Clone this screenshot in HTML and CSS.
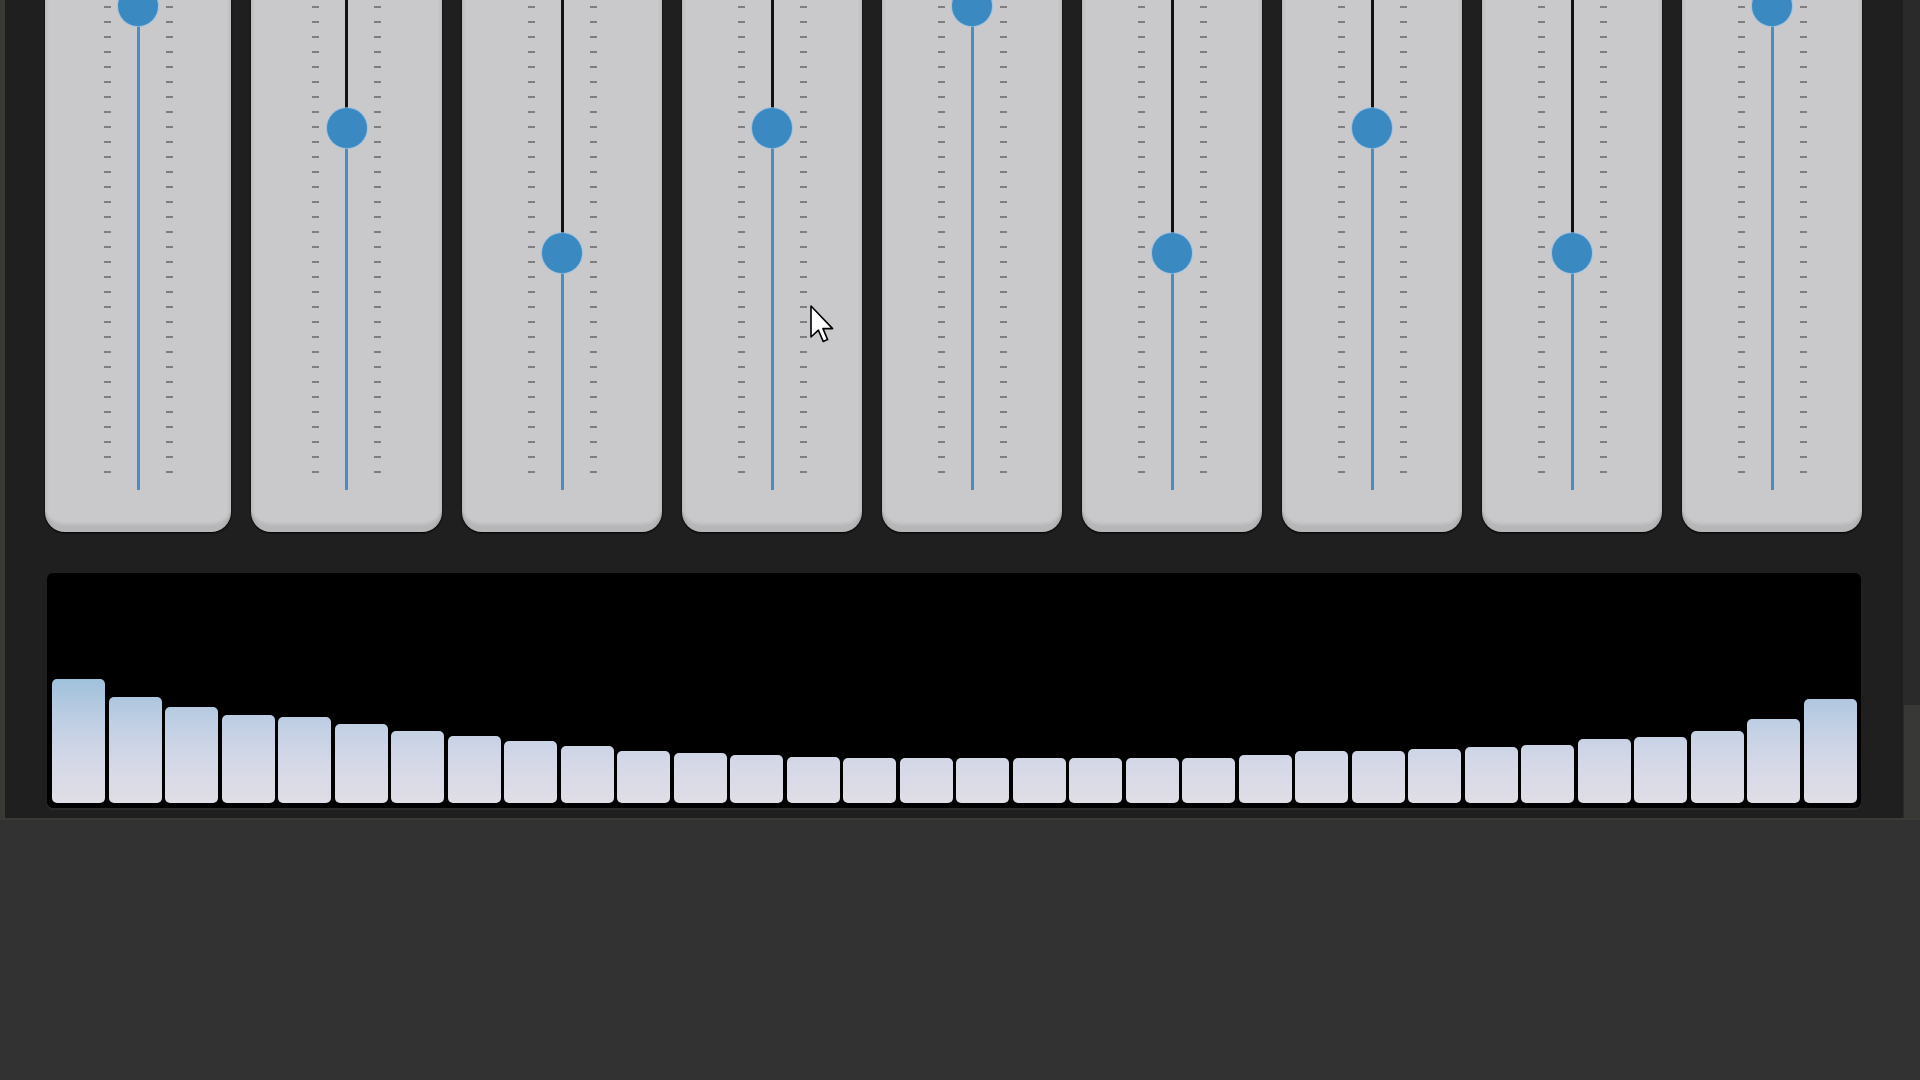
FILE: index.html
```html
<!DOCTYPE html>
<html lang="en">
<head>
<meta charset="utf-8">
<title>Equalizer</title>
<link rel="stylesheet" href="styles.css">
</head>
<body>
<div class="window">
  <div class="edge-left"></div>
  <main class="panel">
    <section class="sliders">
      <div class="card"><div class="scale" style="--c:6px"><div class="ticks"></div><div class="track"></div><div class="thumb"></div></div></div>
      <div class="card"><div class="scale" style="--c:128px"><div class="ticks"></div><div class="track"></div><div class="thumb"></div></div></div>
      <div class="card"><div class="scale" style="--c:253px"><div class="ticks"></div><div class="track"></div><div class="thumb"></div></div></div>
      <div class="card"><div class="scale" style="--c:128px"><div class="ticks"></div><div class="track"></div><div class="thumb"></div></div></div>
      <div class="card"><div class="scale" style="--c:6px"><div class="ticks"></div><div class="track"></div><div class="thumb"></div></div></div>
      <div class="card"><div class="scale" style="--c:253px"><div class="ticks"></div><div class="track"></div><div class="thumb"></div></div></div>
      <div class="card"><div class="scale" style="--c:128px"><div class="ticks"></div><div class="track"></div><div class="thumb"></div></div></div>
      <div class="card"><div class="scale" style="--c:253px"><div class="ticks"></div><div class="track"></div><div class="thumb"></div></div></div>
      <div class="card"><div class="scale" style="--c:6px"><div class="ticks"></div><div class="track"></div><div class="thumb"></div></div></div>
    </section>
    <section class="spectrum">
      <div class="bar" style="height:124px"></div>
      <div class="bar" style="height:106px"></div>
      <div class="bar" style="height:96px"></div>
      <div class="bar" style="height:88px"></div>
      <div class="bar" style="height:86px"></div>
      <div class="bar" style="height:79px"></div>
      <div class="bar" style="height:72px"></div>
      <div class="bar" style="height:67px"></div>
      <div class="bar" style="height:62px"></div>
      <div class="bar" style="height:57px"></div>
      <div class="bar" style="height:52px"></div>
      <div class="bar" style="height:50px"></div>
      <div class="bar" style="height:48px"></div>
      <div class="bar" style="height:46px"></div>
      <div class="bar" style="height:45px"></div>
      <div class="bar" style="height:45px"></div>
      <div class="bar" style="height:45px"></div>
      <div class="bar" style="height:45px"></div>
      <div class="bar" style="height:45px"></div>
      <div class="bar" style="height:45px"></div>
      <div class="bar" style="height:45px"></div>
      <div class="bar" style="height:48px"></div>
      <div class="bar" style="height:52px"></div>
      <div class="bar" style="height:52px"></div>
      <div class="bar" style="height:54px"></div>
      <div class="bar" style="height:56px"></div>
      <div class="bar" style="height:58px"></div>
      <div class="bar" style="height:64px"></div>
      <div class="bar" style="height:66px"></div>
      <div class="bar" style="height:72px"></div>
      <div class="bar" style="height:84px"></div>
      <div class="bar" style="height:104px"></div>
    </section>
  </main>
  <div class="edge-right"><div class="scroll-thumb"></div></div>
</div>
<svg class="cursor" width="24" height="38" viewBox="0 0 12 19" aria-hidden="true">
  <path d="M0.5 0.5 L0.5 16 L4.2 12.6 L6.6 18.2 L8.8 17.3 L6.5 11.8 L11.3 11.8 Z" fill="#ffffff" stroke="#000000" stroke-width="0.8" stroke-linejoin="round"/>
</svg>
</body>
</html>
```

FILE: styles.css
```css
html, body {
  margin: 0;
  padding: 0;
}

body {
  width: 1920px;
  height: 1080px;
  overflow: hidden;
  position: relative;
  background: #323232;
  font-family: "Liberation Sans", Arial, sans-serif;
}

.window {
  display: flex;
  height: 818px;
  border-bottom: 2px solid #3a3a37;
  overflow: hidden;
}

.edge-left {
  width: 5px;
  flex: none;
  background: #3a3935;
}

.edge-right {
  width: 17px;
  flex: none;
  background: #2a2a2a;
  display: flex;
  flex-direction: column;
  justify-content: flex-end;
}

.scroll-thumb {
  height: 113px;
  margin-left: 1px;
  background: #383836;
}

.panel {
  width: 1898px;
  flex: none;
  box-sizing: border-box;
  background: #1f1f1f;
  padding: 0 41px 10px 40px;
  display: flex;
  flex-direction: column;
  row-gap: 41px;
}

.sliders {
  margin-top: -40px;
  display: grid;
  grid-template-columns: 186px 191px 200px repeat(6, 180px);
  column-gap: 20px;
}

.card {
  height: 572px;
  background: #c9c9cb;
  border-radius: 0 0 20px 20px;
  display: flex;
  justify-content: center;
  box-shadow:
    inset 0 -11px 3px -3px rgba(0, 0, 0, 0.09),
    inset 5px 0 3px -3px rgba(0, 0, 0, 0.07),
    inset -5px 0 3px -3px rgba(0, 0, 0, 0.07),
    0 1px 2px #000;
}

.scale {
  position: relative;
  width: 69px;
  height: 510px;
  margin-top: 20px;
}

.ticks {
  position: absolute;
  left: 0;
  right: 0;
  top: 0;
  bottom: 17px;
  background:
    repeating-linear-gradient(to top, #7e7e7e 0 2px, transparent 2px 15px) left bottom / 7px 100% no-repeat,
    repeating-linear-gradient(to top, #7e7e7e 0 2px, transparent 2px 15px) right bottom / 7px 100% no-repeat;
}

.track {
  position: absolute;
  left: 33px;
  width: 3px;
  top: 0;
  bottom: 0;
  background: linear-gradient(to bottom, #111111 0, #111111 var(--c), #4a8dc0 var(--c), #4a8dc0 100%);
}

.thumb {
  position: absolute;
  left: 14.5px;
  top: var(--c);
  width: 40px;
  height: 40px;
  border-radius: 50%;
  background: #3a89c1;
  box-shadow: 0 0 0 1px rgba(140, 190, 235, 0.7);
}

.spectrum {
  margin: 0 1px 0 2px;
  height: 235px;
  box-sizing: border-box;
  background: #000000;
  border-radius: 6px;
  padding: 0 4px 5px 5px;
  display: grid;
  grid-template-columns: repeat(32, 1fr);
  column-gap: 3.5px;
  align-items: end;
  box-shadow: 0 2px 0 #2b2b2b;
}

.bar {
  border-radius: 5px;
  background: linear-gradient(to top, #e0dee6 0px, #d5d8e7 40px, #c0cfe4 80px, #a6c4dd 115px, #9dc1db 130px);
}

.cursor {
  position: absolute;
  left: 810px;
  top: 305px;
}
```
